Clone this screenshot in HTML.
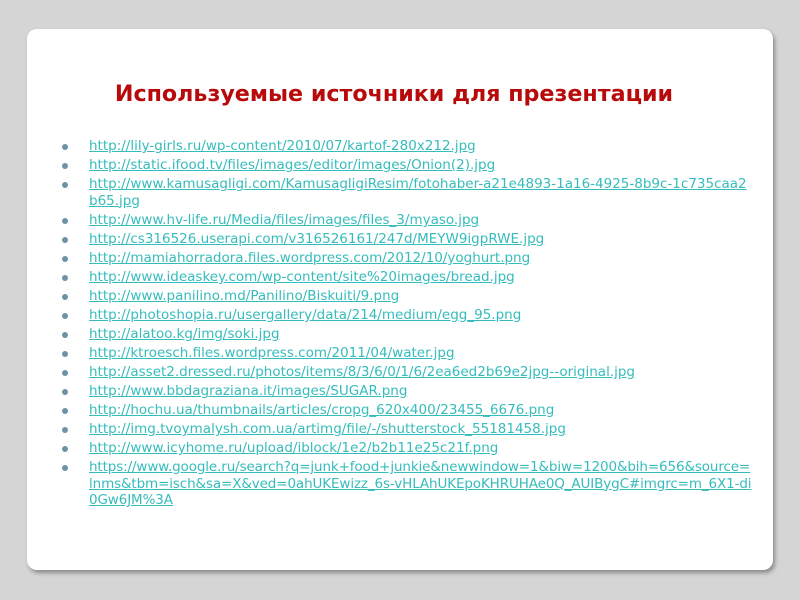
<!DOCTYPE html>
<html><head><meta charset="utf-8"><style>
html,body{margin:0;padding:0;width:800px;height:600px;background:#d5d5d5;overflow:hidden}
.panel{position:absolute;left:27px;top:29px;width:746px;height:541px;background:#fff;border-radius:10px;box-shadow:2px 3px 4px rgba(0,0,0,0.35)}
h1{position:absolute;width:800px;top:81px;margin:0;text-align:center;font:bold 22.2px "DejaVu Sans","Liberation Sans",sans-serif;color:#b80a0a}
ul{position:absolute;left:62px;top:137px;margin:0;padding:0;list-style:none;font:13.5px/19px "DejaVu Sans","Liberation Sans",sans-serif}
li{position:relative;padding-left:27px;color:#36bcbc;text-decoration:underline;white-space:nowrap}
li.w{line-height:16.5px;padding-top:1px;padding-bottom:2px}
li::before{content:"";position:absolute;left:0;top:6.5px;width:6px;height:6px;border-radius:50%;background:#6f93a6}
</style></head><body>
<div class="panel"></div>
<h1 style="left:-6px">Используемые источники для презентации</h1>
<ul>
<li>http://lily-girls.ru/wp-content/2010/07/kartof-280x212.jpg</li>
<li>http://static.ifood.tv/files/images/editor/images/Onion(2).jpg</li>
<li class="w">http://www.kamusagligi.com/KamusagligiResim/fotohaber-a21e4893-1a16-4925-8b9c-1c735caa2<br>b65.jpg</li>
<li>http://www.hv-life.ru/Media/files/images/files_3/myaso.jpg</li>
<li>http://cs316526.userapi.com/v316526161/247d/MEYW9igpRWE.jpg</li>
<li>http://mamiahorradora.files.wordpress.com/2012/10/yoghurt.png</li>
<li>http://www.ideaskey.com/wp-content/site%20images/bread.jpg</li>
<li>http://www.panilino.md/Panilino/Biskuiti/9.png</li>
<li>http://photoshopia.ru/usergallery/data/214/medium/egg_95.png</li>
<li>http://alatoo.kg/img/soki.jpg</li>
<li>http://ktroesch.files.wordpress.com/2011/04/water.jpg</li>
<li>http://asset2.dressed.ru/photos/items/8/3/6/0/1/6/2ea6ed2b69e2jpg--original.jpg</li>
<li>http://www.bbdagraziana.it/images/SUGAR.png</li>
<li>http://hochu.ua/thumbnails/articles/cropg_620x400/23455_6676.png</li>
<li>http://img.tvoymalysh.com.ua/artimg/file/-/shutterstock_55181458.jpg</li>
<li>http://www.icyhome.ru/upload/iblock/1e2/b2b11e25c21f.png</li>
<li class="w"><span style="letter-spacing:-0.12px">https://www.google.ru/search?q=junk+food+junkie&amp;newwindow=1&amp;biw=1200&amp;bih=656&amp;source=<br>lnms&amp;tbm=isch&amp;sa=X&amp;ved=0ahUKEwizz_6s-vHLAhUKEpoKHRUHAe0Q_AUIBygC#imgrc=m_6X1-di<br>0Gw6JM%3A</span></li>
</ul>
</body></html>
